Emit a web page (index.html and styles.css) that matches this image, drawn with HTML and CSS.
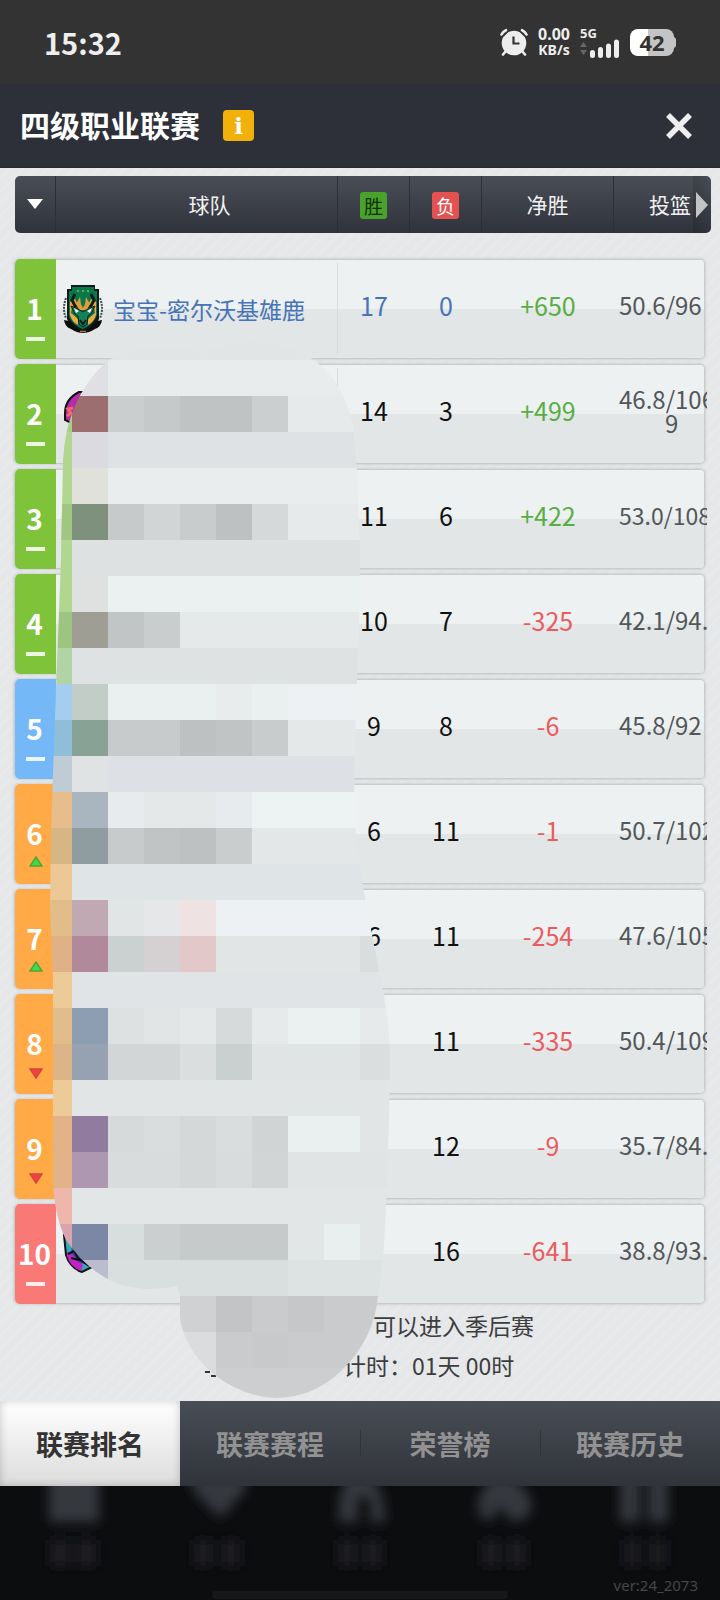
FILE: index.html
```html
<!DOCTYPE html>
<html lang="zh-CN">
<head>
<meta charset="utf-8">
<meta name="viewport" content="width=device-width, initial-scale=1">
<title>四级职业联赛</title>
<link rel="stylesheet" href="styles.css">
</head>
<body>
<div class="status">
  <time class="clock">15:32</time>
  <div class="indicators">
    <svg class="alarm" width="28" height="28" viewBox="0 0 28 28" aria-hidden="true">
      <circle cx="14" cy="15" r="12.3" fill="#eee"/>
      <path d="M6 2.200L1.500 6.500M22 2.200L26.500 6.500" stroke="#333" stroke-width="6" fill="none"/>
      <path d="M1.500 6.500Q3 3.500 6 2.200M26.500 6.500Q25 3.500 22 2.200M6 23l-3 3.500M22 23l3 3.500" stroke="#eee" stroke-width="2.600" fill="none" stroke-linecap="round"/>
      <path d="M13.500 8.500V15.500H19.500" stroke="#333" stroke-width="2.200" fill="none"/>
    </svg>
    <div class="speed"><span>0.00</span><span class="unit">KB/s</span></div>
    <div class="network">
      <span class="generation">5G</span>
      <svg width="40" height="19" viewBox="0 0 40 19" aria-hidden="true">
        <path d="M0 8l3.500-5L7 8zM0 11l3.500 5L7 11z" fill="#666"/>
        <path d="M12.500 13.500v3M20.500 10.500v6M28.500 7v9.500M36.500 3v13.500" stroke="#eee" stroke-width="5" stroke-linecap="round"/>
      </svg>
    </div>
    <div class="battery">42</div>
  </div>
</div>

<header class="titlebar">
  <h1>四级职业联赛</h1>
  <button class="info" type="button" aria-label="说明">i</button>
  <button class="close" type="button" aria-label="关闭">
    <svg width="28" height="28" viewBox="0 0 28 28"><path d="M3 3l22 22M25 3L3 25" stroke="#eee" stroke-width="5.500"/></svg>
  </button>
</header>

<main class="content">
  <table class="standings">
    <thead>
      <tr>
        <th><button class="sort" type="button" aria-label="排序"><svg width="16" height="10" viewBox="0 0 16 10"><path d="M0 0h16L8 10z" fill="#fff"/></svg></button></th>
        <th class="name">球队</th>
        <th><span class="tag win">胜</span></th>
        <th><span class="tag loss">负</span></th>
        <th>净胜</th>
        <th class="shots">投篮</th>
      </tr>
    </thead>
    <tbody>
      <tr class="own">
        <td class="rank green">1<i class="same"></i></td>
        <td class="team">
          <svg class="logo" width="40" height="50" viewBox="0 0 40 50" aria-hidden="true">
            <path d="M3 14q-4 11 0 20M37 14q4 11 0 20" stroke="#444b49" stroke-width="2" stroke-dasharray="2 1" fill="none"/>
            <path d="M8 1h24v4h4v30q-3 9-16 14Q7 44 4 35V5h4z" fill="#101b19"/>
            <path d="M9 3h22v4h3v24q-3 9-14 14Q9 41 6 32V7h3z" fill="#08784b"/>
            <path d="M7 18l5-3 3 6-1 5-5-3-1 6 7 6v6q-6-3-8-10zM33 18l-5-3-3 6 1 5 5-3 1 6-7 6v6q6-3 8-10z" fill="#f0aa3f"/>
            <path d="M12 10l-3 6 3 6 5 1M28 10l3 6-3 6-5 1" fill="none" stroke="#102018" stroke-width="3"/>
            <path d="M13 20l4-7 1 7 2 4 2-4 1-7 4 7-3 6h-8z" fill="#df9b3d"/>
            <path d="M18 12h4l-1 10h-2z" fill="#08784b"/>
            <path d="M8 22l7 3 5 3 5-3 7-3-4 8-3 2-1 8-4 3-4-3-1-8-3-2z" fill="#11845a" stroke="#101b19" stroke-width="1"/>
            <path d="M11 24l5 3-3 2zM29 24l-5 3 3 2z" fill="#fff"/>
            <path d="M17 36l3 4 3-4" stroke="#071914" stroke-width="2" fill="none"/>
            <path d="M1 36q8 1 11 7l8 4 8-4q3-6 11-7-1 7-7 9-6 4-12 4T8 45q-6-2-7-9z" fill="#0c0c0d"/>
            <path d="M17 47.500h6" stroke="#ad783d" stroke-width="1.500"/>
            <path d="M14 7h2M19 7h2M24 7h2" stroke="#70a54e" stroke-width="2"/>
          </svg>
          <span>宝宝-密尔沃基雄鹿</span>
        </td>
        <td>17</td><td>0</td><td class="plus">+650</td><td class="shots">50.6/96</td>
      </tr>
      <tr>
        <td class="rank green">2<i class="same"></i></td>
        <td class="team">
          <svg class="logo" width="40" height="50" viewBox="0 0 40 50" aria-hidden="true"><path d="M16 3Q2 10 2 24v7l20 10V3z" fill="#b52ba8" stroke="#111" stroke-width="2"/><path d="M4 27l4-3-3-4 5-1" stroke="#f26967" stroke-width="3" fill="none"/></svg>
        </td>
        <td>14</td><td>3</td><td class="plus">+499</td><td class="shots">46.8/106<span class="wrapped">9</span></td>
      </tr>
      <tr><td class="rank green">3<i class="same"></i></td><td class="team"></td><td>11</td><td>6</td><td class="plus">+422</td><td class="shots small">53.0/108</td></tr>
      <tr><td class="rank green">4<i class="same"></i></td><td class="team"></td><td>10</td><td>7</td><td class="minus">-325</td><td class="shots">42.1/94.</td></tr>
      <tr><td class="rank blue">5<i class="same"></i></td><td class="team"></td><td>9</td><td>8</td><td class="minus">-6</td><td class="shots">45.8/92</td></tr>
      <tr><td class="rank orange">6<svg class="move" width="14" height="11" viewBox="0 0 14 11"><path d="M7 1l6 9H1z" fill="#3ddc4b" stroke="#54a334" stroke-width="1.500"/></svg></td><td class="team"></td><td>6</td><td>11</td><td class="minus">-1</td><td class="shots">50.7/102</td></tr>
      <tr><td class="rank orange">7<svg class="move" width="14" height="11" viewBox="0 0 14 11"><path d="M7 1l6 9H1z" fill="#3ddc4b" stroke="#54a334" stroke-width="1.500"/></svg></td><td class="team"></td><td>6</td><td>11</td><td class="minus">-254</td><td class="shots">47.6/105</td></tr>
      <tr><td class="rank orange">8<svg class="move down" width="14" height="11" viewBox="0 0 14 11"><path d="M1 1h12l-6 9z" fill="#f83e43" stroke="#ce4939" stroke-width="1.500"/></svg></td><td class="team"></td><td></td><td>11</td><td class="minus">-335</td><td class="shots">50.4/109</td></tr>
      <tr><td class="rank orange">9<svg class="move down" width="14" height="11" viewBox="0 0 14 11"><path d="M1 1h12l-6 9z" fill="#f83e43" stroke="#ce4939" stroke-width="1.500"/></svg></td><td class="team"></td><td></td><td>12</td><td class="minus">-9</td><td class="shots">35.7/84.</td></tr>
      <tr>
        <td class="rank red">10<i class="same"></i></td>
        <td class="team">
          <svg class="logo" width="40" height="50" viewBox="0 0 40 50" aria-hidden="true"><path d="M1 6l2 20q4 13 16 17l10-5L12 6z" fill="#33a8bd" stroke="#111" stroke-width="2"/><path d="M4 23l5 1 11 12-2 6Q7 38 4 27z" fill="#c022c4"/><path d="M9 16l18 20-10-2-9-10z" fill="#2c4c99"/><path d="M5 25l6-3 4 7 11 8M8 29l12 3" stroke="#111" stroke-width="2" fill="none"/></svg>
        </td>
        <td></td><td>16</td><td class="minus">-641</td><td class="shots">38.8/93.</td>
      </tr>
    </tbody>
  </table>
  <button class="scroll" type="button" aria-label="更多列"><svg width="12" height="26" viewBox="0 0 12 26"><path d="M0 0l12 13L0 26z" fill="#c2c3c5"/></svg></button>

  <div class="notes">
    <p>可以进入季后赛</p>
    <p class="countdown">计时：01天 00时</p>
  </div>

  <svg class="mosaic" width="396" height="1232" viewBox="0 168 396 1232" shape-rendering="crispEdges" aria-hidden="true">
    <defs><clipPath id="blob"><path d="M105 363Q130 346 163 346Q187 347 203 354Q225 342 250 342Q282 342 308 356L320 365Q344 386 353 425L357 470L360 550V596L357 680L354 780L356 840L362 882L379 971Q388 1010 390 1050V1082L388 1150L386 1210L383 1260L378 1296Q374 1340 340 1372Q312 1398 275 1398Q240 1396 211 1372Q184 1347 180 1318V1296L177 1286Q147 1293 118 1284Q87 1271 66 1240Q54 1215 53 1180V975L50 910L51 830L56 690L61 560L63 460Q66 400 105 363Z"/></clipPath></defs>
    <path d="M205 1372h5M211 1376h5" stroke="#333" stroke-width="2"/>
    <g clip-path="url(#blob)">
      <path fill="#e2e5e6" d="M36 324h360v36H36z"/>
      <path fill="#e0dfe4" d="M36 360h72v36H36z"/><path fill="#e8eced" d="M108 360h288v36H108z"/>
      <path fill="#a9cf87" d="M36 396h36v36H36z"/><path fill="#9d6e6f" d="M72 396h36v36H72z"/><path fill="#cbcecf" d="M108 396h36v36h-36z"/><path fill="#c6c9ca" d="M144 396h36v36h-36z"/><path fill="#bfc3c4" d="M180 396h72v36h-72z"/><path fill="#cccfd0" d="M252 396h36v36h-36z"/><path fill="#e6eaeb" d="M288 396h108v36H288z"/>
      <path fill="#b0d68f" d="M36 432h36v180H36z"/><path fill="#dbdae0" d="M72 432h36v36H72z"/><path fill="#dee2e4" d="M108 432h288v36H108z"/>
      <path fill="#e0e1da" d="M72 468h36v36H72z"/><path fill="#e9edee" d="M108 468h288v36H108z"/>
      <path fill="#a0c680" d="M36 504h36v36H36z"/><path fill="#7e917d" d="M72 504h36v36H72z"/><path fill="#c7cacb" d="M108 504h36v36h-36z"/><path fill="#d2d5d6" d="M144 504h36v36h-36z"/><path fill="#c9cccd" d="M180 504h36v36h-36z"/><path fill="#bdc1c2" d="M216 504h36v36h-36z"/><path fill="#d5d9da" d="M252 504h36v36h-36z"/><path fill="#e6eaeb" d="M288 504h108v36H288z"/>
      <path fill="#dde1e2" d="M72 540h324v36H72z"/>
      <path fill="#dfe1e0" d="M72 576h36v36H72z"/><path fill="#ebf0f1" d="M108 576h288v36H108z"/>
      <path fill="#9dc480" d="M36 612h36v36H36z"/><path fill="#9e9e94" d="M72 612h36v36H72z"/><path fill="#c2c5c6" d="M108 612h36v36h-36z"/><path fill="#cacdce" d="M144 612h36v36h-36z"/><path fill="#e5e9ea" d="M180 612h216v36H180z"/>
      <path fill="#b0d4a4" d="M36 648h36v36H36z"/><path fill="#dee2e3" d="M72 648h324v36H72z"/>
      <path fill="#a5cdef" d="M36 684h36v36H36z"/><path fill="#c2cdc8" d="M72 684h36v36H72z"/><path fill="#eaeff0" d="M108 684h180v36H108z"/><path fill="#e8ecec" d="M216 684h36v36h-36z"/><path fill="#edf1f3" d="M288 684h108v36H288z"/>
      <path fill="#90bed8" d="M36 720h36v36H36z"/><path fill="#88a396" d="M72 720h36v36H72z"/><path fill="#c7cbcc" d="M108 720h72v36h-72z"/><path fill="#bdc1c2" d="M180 720h36v36h-36z"/><path fill="#c1c4c5" d="M216 720h36v36h-36z"/><path fill="#c9cccd" d="M252 720h36v36h-36z"/><path fill="#e4e8e9" d="M288 720h108v36H288z"/>
      <path fill="#bfccd6" d="M36 756h36v36H36z"/><path fill="#e0e3e4" d="M72 756h36v36H72z"/><path fill="#dde1e5" d="M108 756h288v36H108z"/>
      <path fill="#e7bd8b" d="M36 792h36v36H36z"/><path fill="#a9b6bf" d="M72 792h36v36H72z"/><path fill="#e7ebed" d="M108 792h144v36H108z"/><path fill="#e4e8e9" d="M144 792h72v36h-72z"/><path fill="#edf2f3" d="M252 792h144v36H252z"/>
      <path fill="#d6b685" d="M36 828h36v36H36z"/><path fill="#8f9da1" d="M72 828h36v36H72z"/><path fill="#c8cbcc" d="M108 828h36v36h-36z"/><path fill="#c0c4c4" d="M144 828h36v36h-36z"/><path fill="#bdc1c1" d="M180 828h36v36h-36z"/><path fill="#c9cdce" d="M216 828h36v36h-36z"/><path fill="#e3e7e8" d="M252 828h144v36H252z"/>
      <path fill="#ecc897" d="M36 864h36v36H36z"/><path fill="#dfe4e6" d="M72 864h324v36H72z"/>
      <path fill="#e2bd8a" d="M36 900h36v36H36z"/><path fill="#c0a9b3" d="M72 900h36v36H72z"/><path fill="#e1e5e6" d="M108 900h36v36h-36z"/><path fill="#e6e7e9" d="M144 900h36v36h-36z"/><path fill="#efe2e3" d="M180 900h36v36h-36z"/><path fill="#edf1f3" d="M216 900h180v36H216z"/>
      <path fill="#deb186" d="M36 936h36v36H36z"/><path fill="#b0899b" d="M72 936h36v36H72z"/><path fill="#cbd0d0" d="M108 936h36v36h-36z"/><path fill="#d5d1d3" d="M144 936h36v36h-36z"/><path fill="#e3c8ca" d="M180 936h36v36h-36z"/><path fill="#e1e5e6" d="M216 936h144v36H216z"/><path fill="#d9dddd" d="M360 936h36v36h-36z"/>
      <path fill="#edcb98" d="M36 972h36v36H36z"/><path fill="#e0e4e6" d="M72 972h324v36H72z"/>
      <path fill="#e1bd8c" d="M36 1008h36v36H36z"/><path fill="#8d9eb2" d="M72 1008h36v36H72z"/><path fill="#dde1e1" d="M108 1008h36v36h-36z"/><path fill="#e1e5e6" d="M144 1008h36v36h-36z"/><path fill="#e4e8e9" d="M180 1008h36v36h-36z"/><path fill="#d6dadb" d="M216 1008h36v36h-36z"/><path fill="#e6eaeb" d="M252 1008h144v36H252z"/><path fill="#ebf0f1" d="M288 1008h72v36h-72z"/>
      <path fill="#dbb588" d="M36 1044h36v36H36z"/><path fill="#96a2b1" d="M72 1044h36v36H72z"/><path fill="#d2d6d7" d="M108 1044h72v36h-72z"/><path fill="#dadedf" d="M180 1044h216v36H180z"/><path fill="#cacfd0" d="M216 1044h36v36h-36z"/><path fill="#e0e4e5" d="M252 1044h108v36H252z"/>
      <path fill="#edcb98" d="M36 1080h36v36H36z"/><path fill="#e1e5e6" d="M72 1080h324v36H72z"/>
      <path fill="#e2b389" d="M36 1116h36v72H36z"/><path fill="#917b9e" d="M72 1116h36v36H72z"/><path fill="#d6dada" d="M108 1116h36v36h-36z"/><path fill="#d9dddd" d="M144 1116h108v36H144z"/><path fill="#d4d8d9" d="M180 1116h36v72h-36z"/><path fill="#d0d4d5" d="M252 1116h36v36h-36z"/><path fill="#eaeff0" d="M288 1116h72v36h-72z"/><path fill="#e1e5e6" d="M360 1116h36v36h-36z"/>
      <path fill="#ae98b1" d="M72 1152h36v36H72z"/><path fill="#d8dcdc" d="M108 1152h72v36h-72zM216 1152h36v36h-36z"/><path fill="#d1d5d6" d="M252 1152h36v36h-36z"/><path fill="#e0e4e5" d="M288 1152h108v36H288z"/>
      <path fill="#edb7ac" d="M36 1188h36v36H36z"/><path fill="#e2e6e7" d="M72 1188h324v36H72z"/>
      <path fill="#dba3ae" d="M36 1224h36v36H36z"/><path fill="#7c86a5" d="M72 1224h36v36H72z"/><path fill="#d8dddd" d="M108 1224h36v36h-36z"/><path fill="#cccfd0" d="M144 1224h36v36h-36z"/><path fill="#c7cacb" d="M180 1224h108v36H180z"/><path fill="#e2e6e7" d="M288 1224h108v36H288z"/><path fill="#e9eeef" d="M324 1224h36v36h-36z"/>
      <path fill="#bbbccd" d="M36 1260h72v36H36z"/><path fill="#d9dede" d="M108 1260h180v36H108z"/><path fill="#dde2e3" d="M288 1260h108v36H288z"/>
      <path fill="#cfd1d2" d="M180 1296h36v36h-36z"/><path fill="#c3c4c5" d="M216 1296h36v36h-36z"/><path fill="#cacbcc" d="M252 1296h144v36H252z"/><path fill="#c6c7c8" d="M288 1296h36v36h-36z"/>
      <path fill="#dadcdd" d="M180 1332h36v68h-36z"/><path fill="#cacbcc" d="M216 1332h180v36H216z"/><path fill="#c8c9ca" d="M252 1332h36v36h-36z"/>
      <path fill="#cdced0" d="M216 1368h180v32H216z"/>
    </g>
  </svg>
</main>

<nav class="tabs">
  <button class="active" type="button">联赛排名</button>
  <button type="button">联赛赛程</button>
  <button type="button">荣誉榜</button>
  <button type="button">联赛历史</button>
</nav>

<footer class="dock">
  <svg class="ghosts" viewBox="0 0 720 112" aria-hidden="true">
    <defs><filter id="soft" x="-5%" y="-30%" width="110%" height="160%"><feGaussianBlur stdDeviation="6"/></filter></defs>
    <g filter="url(#soft)">
      <path fill="#36373c" d="M49-10h50v46H49zM192-10h54v14l-26 28-28-28zM338 36l2-28 8-18h24l10 18 4 28h-16V12h-12v24zM478 20q0-18 18-30h14q20 14 22 30-4 18-22 14l-10-14-8 14q-14 2-14-14zM620-10h20v46h-20zM648-10h20v46h-20z"/>
      <path fill="#1e1f22" d="M50 54h20v26H50zM76 54h20v26H76zM194 54h18v26h-18zM222 54h18v26h-18zM338 54h18v26h-18zM364 54h18v26h-18zM482 54h18v26h-18zM508 54h18v26h-18zM624 54h16v26h-16zM650 54h16v26h-16z"/>
    </g>
  </svg>
  <span class="version">ver:24_2073</span>
  <div class="home"></div>
</footer>
</body>
</html>
```

FILE: styles.css
```css
* { box-sizing: border-box; }

body {
  margin: 0;
  min-height: 100vh;
  display: flex;
  flex-direction: column;
  background: #0c0d0f;
  font-family: "Noto Sans CJK SC", "Noto Sans", sans-serif;
  color: #111;
}

button {
  border: 0;
  padding: 0;
  background: none;
  font: inherit;
  color: inherit;
}

svg { display: block; }

.status {
  display: flex;
  align-items: center;
  justify-content: space-between;
  height: 84px;
  padding: 0 46px 0 44px;
  background: #333;
  color: #eee;
}

.clock { font-size: 29px; font-weight: 700; line-height: 40px; }

.indicators { display: flex; align-items: center; gap: 10px; }

.speed {
  display: flex;
  flex-direction: column;
  align-items: center;
  font: 700 16px/16px "Noto Sans", sans-serif;
}

.unit { font-size: 14px; }

.network { display: flex; flex-direction: column; }

.generation { font: 700 13px/12px "Noto Sans", sans-serif; }

.battery {
  position: relative;
  width: 44px;
  height: 27px;
  border-radius: 8px;
  background: linear-gradient(90deg, #fff 18px, #c4c4c4 18px);
  color: #333;
  font: 700 22px/27px "Noto Sans", sans-serif;
  text-align: center;
}

.battery::after {
  content: "";
  position: absolute;
  top: 8px;
  right: -2px;
  width: 3px;
  height: 11px;
  border-radius: 0 3px 3px 0;
  background: #c4c4c4;
}

.titlebar {
  display: flex;
  align-items: center;
  height: 84px;
  padding: 0 25px 0 20px;
  border-bottom: 1px solid #272a32;
  background: #2d3039;
  color: #fff;
}

h1 { margin: 0; padding-bottom: 4px; font-size: 30px; line-height: 40px; font-weight: 700; }

.info {
  width: 31px;
  height: 31px;
  margin-left: 23px;
  border-radius: 4px;
  background: #f1b10a;
  font: 700 23px/31px "DejaVu Serif", serif;
}

.close { margin-left: auto; padding: 2px; }

.content {
  position: relative;
  min-height: 1233px;
  padding: 8px 9px 0 15px;
  background:
    repeating-linear-gradient(135deg, transparent 0 6px, #ffffff18 6px 9px),
    #e5e7e9;
}

.standings { display: block; }
thead, tbody { display: block; }

tr {
  display: grid;
  grid-template-columns: 41px minmax(0, 282fr) minmax(0, 72fr) minmax(0, 72fr) minmax(0, 132fr) minmax(0, 90fr);
}

thead tr {
  height: 57px;
  padding-right: 7px;
  border-radius: 5px;
  background: linear-gradient(#494d55, #30333b);
  color: #f0f0f0;
}

th {
  display: flex;
  align-items: center;
  justify-content: center;
  padding-bottom: 2px;
  border-right: 1px solid #2c2f36;
  font-size: 21px;
  font-weight: 400;
  line-height: 28px;
}

th.name { padding-left: 27px; }
th.shots { border: 0; padding-left: 23px; }

.tag {
  width: 27px;
  height: 27px;
  margin-top: 2px;
  border-radius: 3px;
  font-size: 19px;
  line-height: 27px;
  text-align: center;
}

.win { background: #48a22b; color: #123008; }
.loss { background: #e35151; color: #fff; }

.scroll {
  position: absolute;
  top: 8px;
  right: 9px;
  display: flex;
  align-items: center;
  width: 18px;
  height: 57px;
  padding-left: 3px;
  border-radius: 0 5px 5px 0;
  background: linear-gradient(90deg, #0002, #0000);
}

tbody {
  display: grid;
  gap: 7px;
  margin: 27px 7px 0 0;
}

tbody tr {
  height: 98px;
  border-radius: 4px;
  background: linear-gradient(#edf1f2 50%, #e2e6e7 50%);
  box-shadow: 0 0 3px 1px #b9bdbf;
}

td {
  padding: 28px 0 0;
  font-size: 25px;
  line-height: 34px;
  text-align: center;
}

.rank {
  display: flex;
  flex-direction: column;
  align-items: center;
  margin: -1px 0;
  padding: 32px 2px 0 0;
  border-radius: 5px 0 0 5px;
  color: #fff;
  font-size: 28px;
  font-weight: 700;
  line-height: 34px;
}

.green { background: #7fc33b; }
.blue { background: #74b8f8; }
.orange { background: #ffa947; }
.red { background: #f97977; }

.same {
  width: 19px;
  height: 4px;
  margin: 12px 0 0 2px;
  background: #ffffffd9;
}

.move { margin: 6px 0 0 2px; }
.down { margin-top: 8px; }

.team {
  display: flex;
  align-items: center;
  gap: 10px;
  margin: 3px 0;
  padding: 0 0 0 7px;
  border-right: 1px solid #d8dcde;
  font-size: 23px;
}

.own { color: #4774b8; }
.plus { color: #58ae43; }
.minus { color: #eb5b5e; }

td.shots {
  margin-right: -3px;
  padding-left: 5px;
  overflow: hidden;
  color: #53575a;
  font-size: 24px;
  text-align: left;
  white-space: nowrap;
}

td.small { font-size: 23px; }

td:has(.wrapped) {
  padding-top: 22px;
  line-height: 24px;
}

.wrapped { display: block; padding-left: 46px; }

.notes {
  display: grid;
  gap: 6px;
  padding: 5px 0 0 358px;
  color: #3c3d3f;
  font-size: 23px;
  line-height: 34px;
}

.notes p { margin: 0; white-space: nowrap; }
.notes .countdown { margin-left: -30px; }

.mosaic { position: absolute; top: 0; left: 0; pointer-events: none; }

.tabs {
  display: grid;
  grid-template-columns: repeat(4, 1fr);
  height: 85px;
  background: linear-gradient(#494d55, #30333a);
  color: #929293;
}

.tabs button { font-size: 27px; font-weight: 700; }

.tabs .active {
  background: linear-gradient(#fff, #dcdcdc);
  box-shadow: inset 0 0 8px #0003;
  color: #333;
}

.tabs button + button + button {
  background: linear-gradient(#30333a, #30333a) left center / 1px 27px no-repeat;
}

.dock {
  position: relative;
  flex: 1;
  min-height: 114px;
  display: flex;
  flex-direction: column;
  overflow: hidden;
  background: #0c0d0f;
}

.ghosts { position: absolute; top: 0; left: 0; width: 100%; }

.version {
  margin: auto 22px -5px auto;
  color: #46474a;
  font: 15px/22px "Noto Sans", sans-serif;
}

.home {
  width: 41%;
  height: 8px;
  margin: 0 auto 1px;
  border-radius: 4px;
  background: #17181a;
}
```
